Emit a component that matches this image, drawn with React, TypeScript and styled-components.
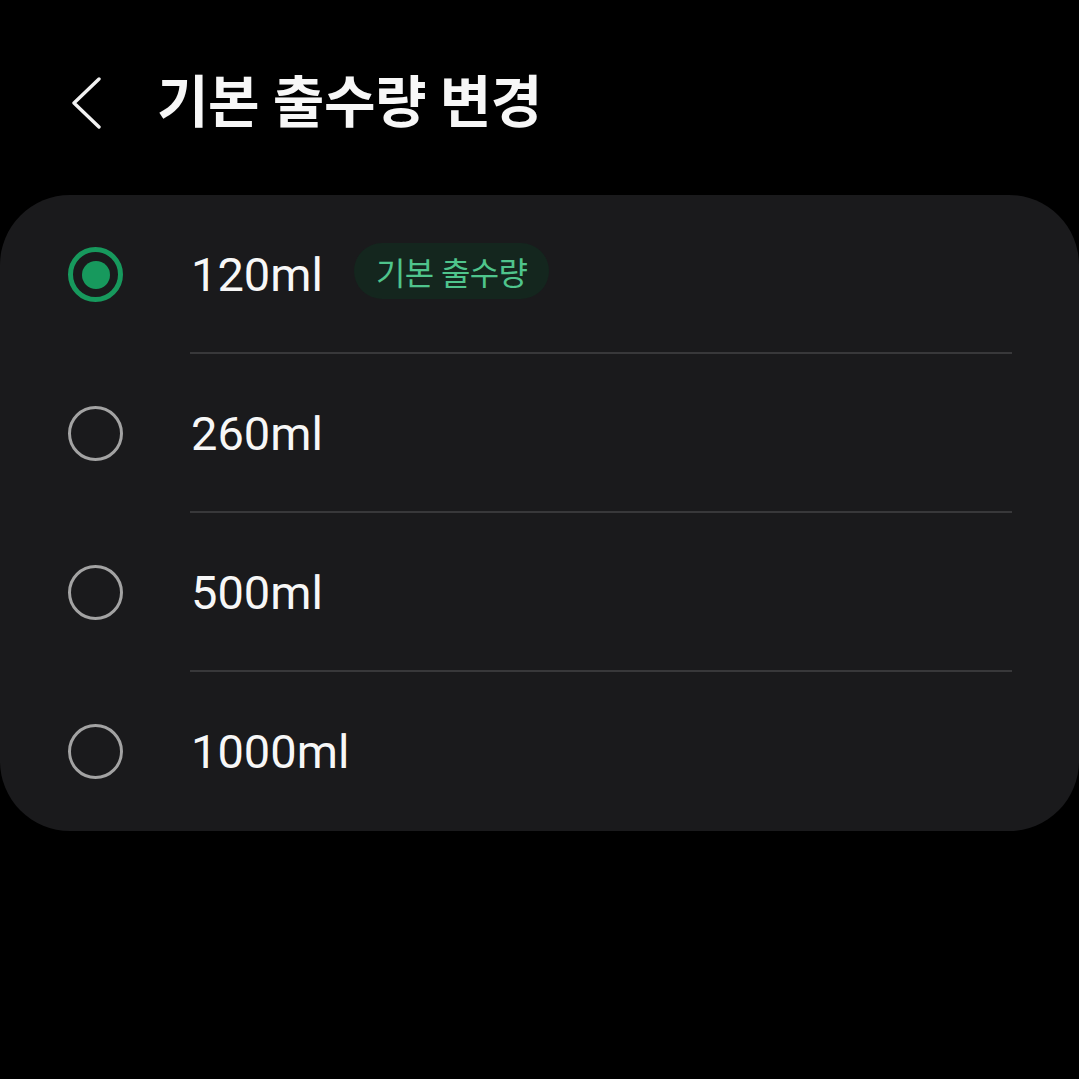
import React, { useState } from "react";
import styled, { createGlobalStyle } from "styled-components";

const Global = createGlobalStyle`
  html, body { margin: 0; padding: 0; background: #000; }
  body { font-family: Roboto, "Noto Sans CJK KR", sans-serif; color: #f7f7f7; }
`;

const Page = styled.div`
  width: 1079px;
  height: 1079px;
  background: #000;
  display: flex;
  flex-direction: column;
`;

const Header = styled.header`
  height: 195px;
  display: flex;
  align-items: flex-start;
  padding-top: 74px;
  box-sizing: border-box;
  padding-left: 70px;
`;

const BackButton = styled.button`
  width: 36px;
  height: 58px;
  padding: 0;
  border: none;
  background: none;
  display: flex;
  align-items: center;
  justify-content: flex-start;
  margin-right: 51px;
  cursor: pointer;
`;

const Title = styled.h1`
  margin: 0;
  font-family: Roboto, "Noto Sans CJK KR", sans-serif;
  font-weight: 700;
  font-size: 56px;
  line-height: 58px;
  letter-spacing: -0.4px;
  color: #f7f7f7;
`;

const Card = styled.div`
  background: #1a1a1c;
  border-radius: 70px;
  display: flex;
  flex-direction: column;
`;

const Row = styled.div`
  height: 159px;
  display: flex;
  align-items: stretch;
  cursor: pointer;
`;

const RadioCell = styled.div`
  width: 190px;
  padding-left: 68px;
  box-sizing: border-box;
  display: flex;
  align-items: center;
`;

const Radio = styled.span<{ $checked: boolean }>`
  width: 55px;
  height: 55px;
  box-sizing: border-box;
  border-radius: 50%;
  border: ${(p) => (p.$checked ? "5.5px solid #17995d" : "3px solid #a3a3a3")};
  display: flex;
  align-items: center;
  justify-content: center;
`;

const RadioDot = styled.span`
  width: 28px;
  height: 28px;
  border-radius: 50%;
  background: #17995d;
`;

const Content = styled.div<{ $last: boolean }>`
  flex: 1;
  margin-right: 67px;
  display: flex;
  align-items: center;
  gap: 31px;
  border-bottom: ${(p) => (p.$last ? "none" : "2px solid #38383a")};
  box-sizing: border-box;
  padding-top: ${(p) => (p.$last ? "0" : "2px")};
`;

const Label = styled.span`
  font-family: Roboto, sans-serif;
  font-size: 47px;
  color: #f7f7f7;
  margin-left: 1px;
`;

const Badge = styled.span`
  height: 56px;
  padding: 0 22px;
  border-radius: 28px;
  background: #14261e;
  color: #4fc48c;
  font-family: Roboto, "Noto Sans CJK KR", sans-serif;
  font-size: 32px;
  letter-spacing: -0.6px;
  display: flex;
  align-items: center;
  margin-top: -8px;
`;

const options = ["120ml", "260ml", "500ml", "1000ml"];

export default function App() {
  const [selected, setSelected] = useState(0);
  return (
    <Page>
      <Global />
      <Header>
        <BackButton aria-label="뒤로">
          <svg width="32" height="52" viewBox="0 0 32 52" fill="none">
            <path
              d="M29 2 L4 26 L29 50"
              stroke="#f2f2f2"
              strokeWidth="3.4"
              strokeLinecap="round"
              strokeLinejoin="round"
            />
          </svg>
        </BackButton>
        <Title>기본 출수량 변경</Title>
      </Header>
      <Card>
        {options.map((o, i) => (
          <Row key={o} onClick={() => setSelected(i)}>
            <RadioCell>
              <Radio $checked={selected === i}>{selected === i && <RadioDot />}</Radio>
            </RadioCell>
            <Content $last={i === options.length - 1}>
              <Label>{o}</Label>
              {i === 0 && <Badge>기본 출수량</Badge>}
            </Content>
          </Row>
        ))}
      </Card>
    </Page>
  );
}
